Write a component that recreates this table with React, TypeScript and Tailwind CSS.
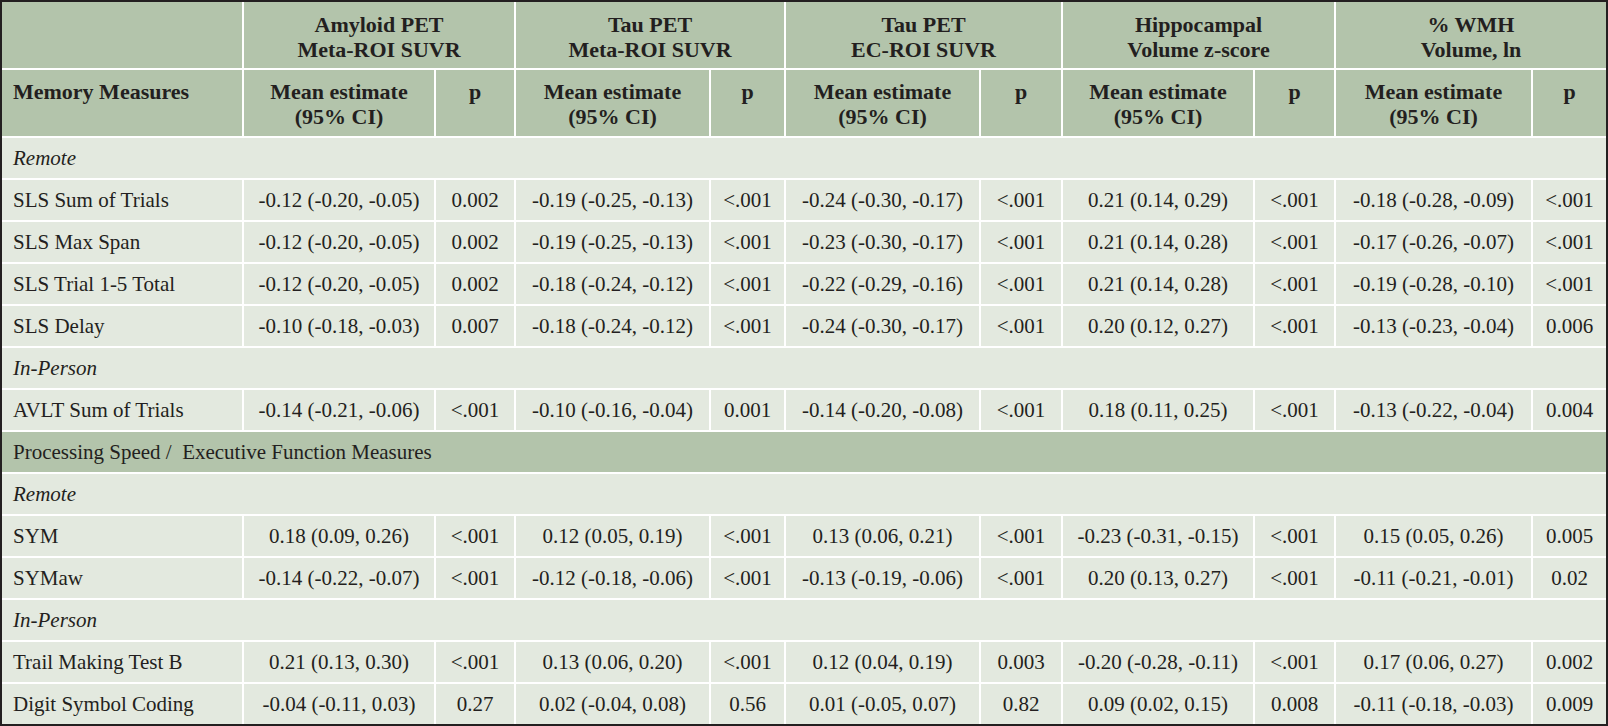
import React from "react";

type Row =
  | { kind: "section"; label: string; italic?: boolean; dark?: boolean }
  | { kind: "data"; label: string; cells: string[] };

const rows: Row[] = [
  { kind: "section", label: "Remote", italic: true },
  {
    kind: "data",
    label: "SLS Sum of Trials",
    cells: ["-0.12 (-0.20, -0.05)", "0.002", "-0.19 (-0.25, -0.13)", "<.001", "-0.24 (-0.30, -0.17)", "<.001", "0.21 (0.14, 0.29)", "<.001", "-0.18 (-0.28, -0.09)", "<.001"],
  },
  {
    kind: "data",
    label: "SLS Max Span",
    cells: ["-0.12 (-0.20, -0.05)", "0.002", "-0.19 (-0.25, -0.13)", "<.001", "-0.23 (-0.30, -0.17)", "<.001", "0.21 (0.14, 0.28)", "<.001", "-0.17 (-0.26, -0.07)", "<.001"],
  },
  {
    kind: "data",
    label: "SLS Trial 1-5 Total",
    cells: ["-0.12 (-0.20, -0.05)", "0.002", "-0.18 (-0.24, -0.12)", "<.001", "-0.22 (-0.29, -0.16)", "<.001", "0.21 (0.14, 0.28)", "<.001", "-0.19 (-0.28, -0.10)", "<.001"],
  },
  {
    kind: "data",
    label: "SLS Delay",
    cells: ["-0.10 (-0.18, -0.03)", "0.007", "-0.18 (-0.24, -0.12)", "<.001", "-0.24 (-0.30, -0.17)", "<.001", "0.20 (0.12, 0.27)", "<.001", "-0.13 (-0.23, -0.04)", "0.006"],
  },
  { kind: "section", label: "In-Person", italic: true },
  {
    kind: "data",
    label: "AVLT Sum of Trials",
    cells: ["-0.14 (-0.21, -0.06)", "<.001", "-0.10 (-0.16, -0.04)", "0.001", "-0.14 (-0.20, -0.08)", "<.001", "0.18 (0.11, 0.25)", "<.001", "-0.13 (-0.22, -0.04)", "0.004"],
  },
  { kind: "section", label: "Processing Speed /\u00a0 Executive Function Measures", dark: true },
  { kind: "section", label: "Remote", italic: true },
  {
    kind: "data",
    label: "SYM",
    cells: ["0.18 (0.09, 0.26)", "<.001", "0.12 (0.05, 0.19)", "<.001", "0.13 (0.06, 0.21)", "<.001", "-0.23 (-0.31, -0.15)", "<.001", "0.15 (0.05, 0.26)", "0.005"],
  },
  {
    kind: "data",
    label: "SYMaw",
    cells: ["-0.14 (-0.22, -0.07)", "<.001", "-0.12 (-0.18, -0.06)", "<.001", "-0.13 (-0.19, -0.06)", "<.001", "0.20 (0.13, 0.27)", "<.001", "-0.11 (-0.21, -0.01)", "0.02"],
  },
  { kind: "section", label: "In-Person", italic: true },
  {
    kind: "data",
    label: "Trail Making Test B",
    cells: ["0.21 (0.13, 0.30)", "<.001", "0.13 (0.06, 0.20)", "<.001", "0.12 (0.04, 0.19)", "0.003", "-0.20 (-0.28, -0.11)", "<.001", "0.17 (0.06, 0.27)", "0.002"],
  },
  {
    kind: "data",
    label: "Digit Symbol Coding",
    cells: ["-0.04 (-0.11, 0.03)", "0.27", "0.02 (-0.04, 0.08)", "0.56", "0.01 (-0.05, 0.07)", "0.82", "0.09 (0.02, 0.15)", "0.008", "-0.11 (-0.18, -0.03)", "0.009"],
  },
];

const groups: [string, string][] = [
  ["Amyloid PET", "Meta-ROI SUVR"],
  ["Tau PET", "Meta-ROI SUVR"],
  ["Tau PET", "EC-ROI SUVR"],
  ["Hippocampal", "Volume z-score"],
  ["% WMH", "Volume, ln"],
];

const HEAD = "bg-[#b3c4ab]";
const BODY = "bg-[#e3e9df]";

export default function App() {
  return (
    <div
      className="w-[1608px] h-[726px] bg-[#231f20] p-[2px] text-[#231f20]"
      style={{ fontFamily: '"Liberation Serif", "Times New Roman", serif' }}
    >
      <div className="grid h-[722px] gap-[2px] bg-white grid-cols-[240px_190px_78px_193px_73px_193px_80px_190px_79px_195px_73px] grid-rows-[66px_66px_repeat(14,40px)] text-[21px] leading-[25px]">
        {/* header row 1 */}
        <div className={HEAD} />
        {groups.map((g, i) => (
          <div
            key={i}
            className={`${HEAD} col-span-2 flex flex-col items-center pt-[10px] font-bold text-[22px] leading-[25px]`}
          >
            <span>{g[0]}</span>
            <span>{g[1]}</span>
          </div>
        ))}
        {/* header row 2 */}
        <div className={`${HEAD} pl-[11px] pt-[9px] font-bold text-[22px] leading-[25px]`}>Memory Measures</div>
        {groups.map((_, i) => (
          <React.Fragment key={i}>
            <div className={`${HEAD} flex flex-col items-center pt-[9px] font-bold text-[22px] leading-[25px]`}>
              <span>Mean estimate</span>
              <span>(95% CI)</span>
            </div>
            <div className={`${HEAD} text-center pt-[9px] font-bold text-[22px] leading-[25px]`}>p</div>
          </React.Fragment>
        ))}
        {/* body */}
        {rows.map((r, ri) =>
          r.kind === "section" ? (
            <div
              key={ri}
              className={`${r.dark ? HEAD : BODY} col-span-11 flex items-center pl-[11px] whitespace-pre ${r.italic ? "italic" : ""}`}
            >
              {r.label}
            </div>
          ) : (
            <React.Fragment key={ri}>
              <div className={`${BODY} flex items-center pl-[11px] whitespace-nowrap`}>{r.label}</div>
              {r.cells.map((c, ci) => (
                <div key={ci} className={`${BODY} flex items-center justify-center whitespace-nowrap`}>
                  {c}
                </div>
              ))}
            </React.Fragment>
          )
        )}
      </div>
    </div>
  );
}
